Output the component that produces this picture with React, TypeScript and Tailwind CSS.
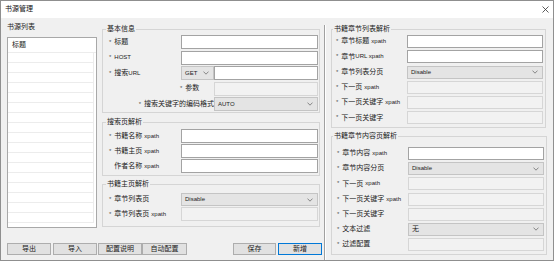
import React from "react";

const FONT = "font-['Liberation_Sans','Noto_Sans_CJK_SC',sans-serif]";

const Chevron = () => (
  <svg width="6" height="4" viewBox="0 0 6 4" className="shrink-0">
    <path d="M0.5 0.6 L3 3.2 L5.5 0.6" fill="none" stroke="#6e6e6e" strokeWidth="0.8" />
  </svg>
);

type LabelProps = { text: string; sub?: string; star?: boolean; tight?: boolean; className?: string };

const Label = ({ text, sub, star = true, tight = false, className = "" }: LabelProps) => (
  <div className={`flex items-center whitespace-nowrap ${className}`}>
    <span className={`mr-[3px] text-[6px] text-[#555] ${star ? "" : "invisible"}`}>*</span>
    <span>{text}</span>
    {sub && <span className={`text-[6px] text-[#222] ${tight ? "" : "ml-[2px]"}`}>{sub}</span>}
  </div>
);

const TextBox = ({ disabled = false, className = "" }: { disabled?: boolean; className?: string }) => (
  <div
    className={`h-full shrink-0 border ${
      disabled ? "border-[#d6d6d6] bg-[#f2f2f2]" : "border-[#a3a3a3] bg-white"
    } ${className}`}
  />
);

const Combo = ({ value, className = "" }: { value: string; className?: string }) => (
  <div
    className={`flex h-full shrink-0 items-center justify-between border border-[#c4c4c4] bg-[#e4e4e4] pl-[3px] pr-[4px] text-[6px] text-[#222] ${className}`}
  >
    <span>{value}</span>
    <Chevron />
  </div>
);

const Group = ({
  title,
  className = "",
  legendClass = "ml-[3px]",
  children,
}: {
  title: string;
  className?: string;
  legendClass?: string;
  children: React.ReactNode;
}) => (
  <fieldset className={`border border-[#d5d5d5] ${className}`}>
    <legend className={`px-[1px] text-[7px] leading-[10px] text-[#222] ${legendClass}`}>{title}</legend>
    {children}
  </fieldset>
);

const Button = ({ text, primary = false, className = "" }: { text: string; primary?: boolean; className?: string }) => (
  <div
    className={`flex h-[12px] shrink-0 items-center justify-center border bg-[#e1e1e1] text-[7px] text-[#222] ${
      primary ? "border-[#0078d7]" : "border-[#adadad]"
    } ${className}`}
  >
    {text}
  </div>
);

export default function App() {
  const listRows = Array.from({ length: 17 });

  return (
    <div className={`h-[263px] w-[554px] bg-white ${FONT}`}>
      <div className="flex h-[261px] w-[554px] flex-col border border-[#8f8f8f]">
        {/* title bar */}
        <div className="flex h-[17px] shrink-0 items-center justify-between bg-white pl-[4px] pr-[4px]">
          <span className="text-[7px] text-[#111]">书源管理</span>
          <svg width="7" height="7" viewBox="0 0 7 7">
            <path d="M0.5 0.5 L6.5 6.5 M6.5 0.5 L0.5 6.5" stroke="#333" strokeWidth="0.8" />
          </svg>
        </div>

        {/* body */}
        <div className="flex flex-1 bg-[#f0f0f0] pl-[6px] text-[7px] text-[#222]">
          {/* left area */}
          <div className="flex w-[315px] shrink-0 flex-col">
            <div className="flex">
              {/* list column */}
              <div className="flex w-[90px] shrink-0 flex-col pt-[4px]">
                <div className="h-[10px] leading-[10px]">书源列表</div>
                <div className="mt-[5px] h-[191px] overflow-hidden border border-[#a8a8a8] bg-white">
                  <div className="flex h-[15px] items-center border-b border-[#ececec] pl-[4px]">标题</div>
                  {listRows.map((_, i) => (
                    <div key={i} className="h-[10px] w-[86px] border-b border-r border-[#ececec]" />
                  ))}
                </div>
              </div>

              {/* middle column */}
              <div className="ml-[5px] flex w-[218px] shrink-0 flex-col pt-[6px]">
                <Group title="基本信息">
                  <div className="flex flex-col gap-[1.5px] pb-[1px] pl-[6px] pr-[1px] pt-[1px]">
                    <div className="flex h-[14px]">
                      <Label text="标题" className="w-[72px]" />
                      <TextBox className="w-[137px]" />
                    </div>
                    <div className="flex h-[14px]">
                      <Label text="HOST" className="w-[72px] text-[6px]" />
                      <TextBox className="w-[137px]" />
                    </div>
                    <div className="flex h-[14px]">
                      <Label text="搜索" sub="URL" tight className="w-[72px]" />
                      <Combo value="GET" className="w-[33px]" />
                      <TextBox className="w-[104px]" />
                    </div>
                    <div className="flex h-[14px]">
                      <Label text="参数" className="ml-[71px] w-[34px]" />
                      <TextBox disabled className="w-[104px]" />
                    </div>
                    <div className="flex h-[14px]">
                      <Label text="搜索关键字的编码格式" className="w-[105px] justify-end" />
                      <Combo value="AUTO" className="w-[104px]" />
                    </div>
                  </div>
                </Group>

                <Group title="搜索页解析" className="mt-[4px]">
                  <div className="flex flex-col gap-[1px] pb-[2px] pl-[6px] pr-[1px] pt-[2px]">
                    <div className="flex h-[14px]">
                      <Label text="书籍名称" sub="xpath" className="w-[72px]" />
                      <TextBox className="w-[137px]" />
                    </div>
                    <div className="flex h-[14px]">
                      <Label text="书籍主页" sub="xpath" className="w-[72px]" />
                      <TextBox className="w-[137px]" />
                    </div>
                    <div className="flex h-[14px]">
                      <Label text="作者名称" sub="xpath" star={false} className="w-[72px]" />
                      <TextBox className="w-[137px]" />
                    </div>
                  </div>
                </Group>

                <Group title="书籍主页解析" className="mt-[3px]">
                  <div className="flex flex-col gap-[1px] pb-[5px] pl-[6px] pr-[1px] pt-[4px]">
                    <div className="flex h-[13px]">
                      <Label text="章节列表页" className="w-[72px]" />
                      <Combo value="Disable" className="w-[137px]" />
                    </div>
                    <div className="flex h-[14px]">
                      <Label text="章节列表页" sub="xpath" className="w-[72px]" />
                      <TextBox disabled className="w-[137px]" />
                    </div>
                  </div>
                </Group>
              </div>
            </div>

            {/* buttons */}
            <div className="mt-[15px] flex">
              <Button text="导出" className="w-[44px]" />
              <Button text="导入" className="ml-[2px] w-[44px]" />
              <Button text="配置说明" className="ml-[1px] w-[44px]" />
              <Button text="自动配置" className="w-[45px]" />
              <Button text="保存" className="ml-[46px] w-[43px]" />
              <Button text="新增" primary className="ml-[2px] w-[44px]" />
            </div>
          </div>

          {/* splitter */}
          <div className="ml-[2px] mt-[7px] w-[2px] shrink-0 border-l border-r border-l-[#a0a0a0] border-r-white" />

          {/* right column */}
          <div className="ml-[5px] flex w-[215px] shrink-0 flex-col pt-[6px]">
            <Group title="书籍章节列表解析" legendClass="ml-[1px]">
              <div className="flex flex-col gap-[2.3px] pb-[3px] pl-[4px] pr-[2px] pt-[1px]">
                <div className="flex h-[13px]">
                  <Label text="章节标题" sub="xpath" className="w-[71px]" />
                  <TextBox className="w-[136px]" />
                </div>
                <div className="flex h-[13px]">
                  <Label text="章节" sub="URL  xpath" tight className="w-[71px]" />
                  <TextBox className="w-[136px]" />
                </div>
                <div className="flex h-[13px]">
                  <Label text="章节列表分页" className="w-[71px]" />
                  <Combo value="Disable" className="w-[136px]" />
                </div>
                <div className="flex h-[13px]">
                  <Label text="下一页" sub="xpath" className="w-[71px]" />
                  <TextBox disabled className="w-[136px]" />
                </div>
                <div className="flex h-[13px]">
                  <Label text="下一页关键字" sub="xpath" className="w-[71px]" />
                  <TextBox disabled className="w-[136px]" />
                </div>
                <div className="flex h-[13px]">
                  <Label text="下一页关键字" className="w-[71px]" />
                  <TextBox disabled className="w-[136px]" />
                </div>
              </div>
            </Group>

            <Group title="书籍章节内容页解析" legendClass="ml-[1px]" className="mt-[3px]">
              <div className="flex flex-col gap-[2.2px] pb-[2.5px] pl-[4px] pr-[2px] pt-[5.5px]">
                <div className="flex h-[13px]">
                  <Label text="章节内容" sub="xpath" className="ml-[1px] w-[71px]" />
                  <TextBox className="w-[136px]" />
                </div>
                <div className="flex h-[13px]">
                  <Label text="章节内容分页" className="ml-[1px] w-[71px]" />
                  <Combo value="Disable" className="w-[136px]" />
                </div>
                <div className="flex h-[13px]">
                  <Label text="下一页" sub="xpath" className="ml-[1px] w-[71px]" />
                  <TextBox disabled className="w-[136px]" />
                </div>
                <div className="flex h-[13px]">
                  <Label text="下一页关键字" sub="xpath" className="ml-[1px] w-[71px]" />
                  <TextBox disabled className="w-[136px]" />
                </div>
                <div className="flex h-[13px]">
                  <Label text="下一页关键字" className="ml-[1px] w-[71px]" />
                  <TextBox disabled className="w-[136px]" />
                </div>
                <div className="flex h-[13px]">
                  <Label text="文本过滤" className="ml-[1px] w-[71px]" />
                  <Combo value="无" className="w-[136px] text-[7px]" />
                </div>
                <div className="flex h-[13px]">
                  <Label text="过滤配置" className="ml-[1px] w-[71px]" />
                  <TextBox disabled className="w-[136px]" />
                </div>
              </div>
            </Group>
          </div>
        </div>
      </div>
    </div>
  );
}
